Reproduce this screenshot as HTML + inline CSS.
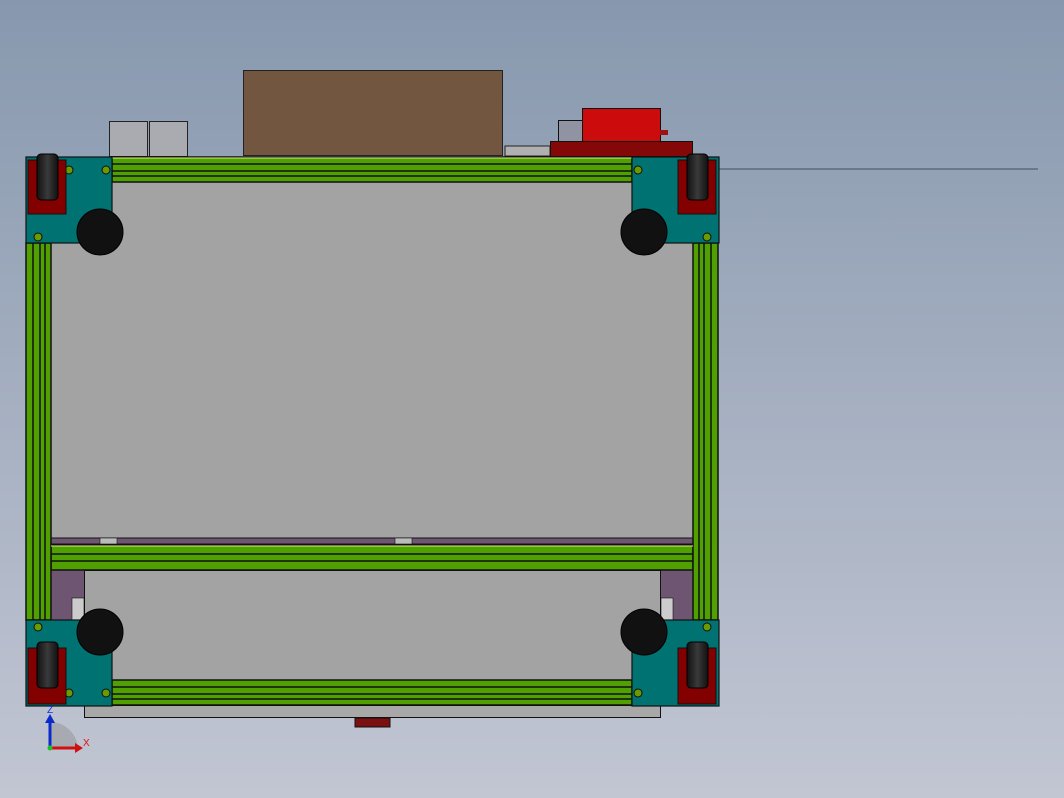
<!DOCTYPE html><html><head><style>html,body{margin:0;padding:0;width:1064px;height:798px;overflow:hidden}</style></head><body>
<svg width="1064" height="798" xmlns="http://www.w3.org/2000/svg" font-family="Liberation Sans, sans-serif">
<defs><linearGradient id="bg" x1="0" y1="0" x2="0" y2="1"><stop offset="0" stop-color="#8798ae"/><stop offset="1" stop-color="#c2c6d3"/></linearGradient>
<linearGradient id="wh" x1="0" x2="1"><stop offset="0" stop-color="#111"/><stop offset=".5" stop-color="#3a3a3a"/><stop offset="1" stop-color="#111"/></linearGradient></defs>
<rect width="1064" height="798" fill="url(#bg)"/>
<line x1="719" y1="169" x2="1038" y2="169" stroke="#444c5a" stroke-width="1"/>
<!-- top items -->
<rect x="243.5" y="70.5" width="259" height="85" fill="#735640" stroke="#222"/>
<rect x="109.5" y="121.5" width="38" height="35" fill="#a9abb0" stroke="#222"/>
<rect x="149.5" y="121.5" width="38" height="35" fill="#a9abb0" stroke="#222"/>
<rect x="505" y="146" width="45" height="10" fill="#b0b0b0" stroke="#222"/>
<rect x="558.5" y="120.5" width="25" height="21" fill="#8f93a2" stroke="#111"/>
<rect x="582.5" y="108.5" width="78" height="33" fill="#cc0c0c" stroke="#111"/>
<rect x="660" y="130" width="8" height="5" fill="#a01010"/>
<rect x="550.5" y="141.5" width="142" height="15" fill="#840808" stroke="#111"/>
<!-- panels -->
<rect x="51" y="182" width="642" height="358" fill="#a3a3a3" stroke="#111"/>
<rect x="51" y="538" width="642" height="6" fill="#6e5572" stroke="#111" stroke-width="1"/>
<rect x="100" y="538" width="17" height="6" fill="#bbb" stroke="#111" stroke-width=".6"/>
<rect x="395" y="538" width="17" height="6" fill="#bbb" stroke="#111" stroke-width=".6"/>
<rect x="51" y="570" width="642" height="50" fill="#6e5572"/>
<rect x="84.5" y="570.5" width="576" height="110" fill="#a3a3a3" stroke="#111"/>
<rect x="72" y="598" width="12" height="22" fill="#ccc" stroke="#111" stroke-width=".6"/>
<rect x="661" y="598" width="12" height="22" fill="#ccc" stroke="#111" stroke-width=".6"/>
<rect x="84.5" y="705.5" width="576" height="12" fill="#a8a8a8" stroke="#111"/>
<rect x="355" y="718" width="35" height="9" fill="#7a1010" stroke="#111"/>
<!-- rails -->
<g stroke="#111" stroke-width="1.5">
<rect x="112" y="157" width="520" height="25" fill="#4fa000"/>
<line x1="112" y1="164" x2="632" y2="164"/><line x1="112" y1="171" x2="632" y2="171"/><line x1="112" y1="176" x2="632" y2="176"/>
<rect x="51" y="545" width="642" height="25" fill="#4fa000"/>
<line x1="51" y1="554" x2="693" y2="554"/><line x1="51" y1="561" x2="693" y2="561"/>
<rect x="112" y="680" width="520" height="25" fill="#4fa000"/>
<line x1="112" y1="687" x2="632" y2="687"/><line x1="112" y1="694" x2="632" y2="694"/><line x1="112" y1="699" x2="632" y2="699"/>
<rect x="26" y="243" width="25" height="377" fill="#4fa000"/>
<line x1="33" y1="243" x2="33" y2="620"/><line x1="40" y1="243" x2="40" y2="620"/><line x1="45" y1="243" x2="45" y2="620"/>
<rect x="693" y="243" width="25" height="377" fill="#4fa000"/>
<line x1="699" y1="243" x2="699" y2="620"/><line x1="704" y1="243" x2="704" y2="620"/><line x1="711" y1="243" x2="711" y2="620"/>
</g>
<g stroke="#d8f080" stroke-width="1"><line x1="112" y1="158" x2="632" y2="158"/><line x1="51" y1="546" x2="693" y2="546"/></g>
<!-- corner plates -->
<g fill="#007272" stroke="#111" stroke-width="1.2">
<rect x="26" y="157" width="86" height="86"/><rect x="632" y="157" width="87" height="86"/>
<rect x="26" y="620" width="86" height="86"/><rect x="632" y="620" width="87" height="86"/>
</g>
<g fill="#6a9a00" stroke="#111">
<circle cx="38" cy="237" r="4"/><circle cx="106" cy="170" r="4"/><circle cx="69" cy="170" r="4"/>
<circle cx="638" cy="170" r="4"/><circle cx="707" cy="237" r="4"/>
<circle cx="38" cy="627" r="4"/><circle cx="106" cy="693" r="4"/><circle cx="69" cy="693" r="4"/>
<circle cx="638" cy="693" r="4"/><circle cx="707" cy="627" r="4"/>
</g>
<!-- casters -->
<g stroke="#111">
<rect x="28" y="160" width="38" height="54" fill="#820000"/>
<rect x="678" y="160" width="38" height="54" fill="#820000"/>
<rect x="28" y="648" width="38" height="56" fill="#820000"/>
<rect x="678" y="648" width="38" height="56" fill="#820000"/>
</g>
<g fill="url(#wh)" stroke="#000">
<rect x="37" y="154" width="21" height="46" rx="4"/><rect x="687" y="154" width="21" height="46" rx="4"/>
<rect x="37" y="642" width="21" height="46" rx="4"/><rect x="687" y="642" width="21" height="46" rx="4"/>
</g>
<g fill="#111" stroke="#000">
<circle cx="100" cy="232" r="23"/><circle cx="644" cy="232" r="23"/>
<circle cx="100" cy="632" r="23"/><circle cx="644" cy="632" r="23"/>
</g>
<!-- triad -->
<path d="M50 748 L50 722 A28 28 0 0 1 78 748 Z" fill="#9a9a9e" opacity=".6"/>
<line x1="50" y1="748" x2="50" y2="722" stroke="#0a2acc" stroke-width="3"/>
<polygon points="45,723 55,723 50,714" fill="#0a2acc"/>
<line x1="50" y1="748" x2="76" y2="748" stroke="#d01010" stroke-width="3"/>
<polygon points="75,743 75,753 83,748" fill="#d01010"/>
<circle cx="50" cy="748" r="2.5" fill="#20c020"/>
<text x="47" y="713" font-size="10" fill="#1030d0">Z</text>
<text x="83" y="746" font-size="10" fill="#e01010">X</text>
</svg></body></html>
